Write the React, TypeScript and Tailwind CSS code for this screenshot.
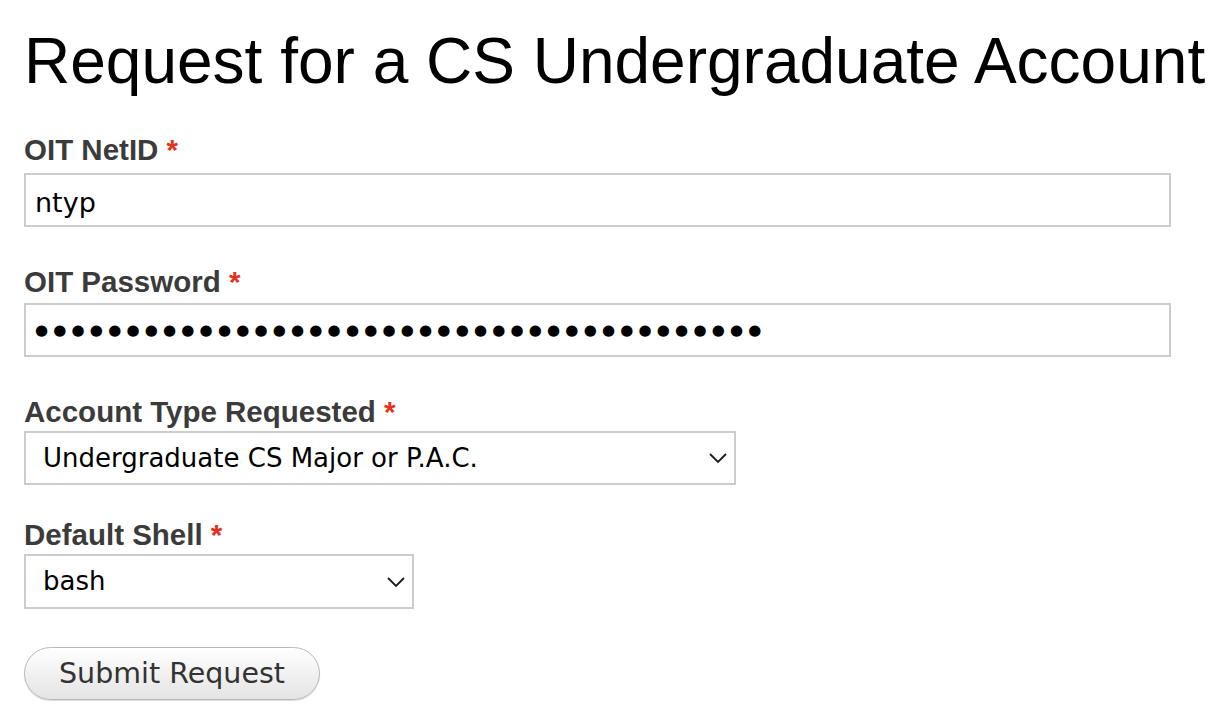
import React, { useState } from 'react';

const labelCls =
  "block font-['Liberation_Sans',Arial,sans-serif] text-[29.5px] font-bold leading-[32px] text-[#3b3b3b]";
const fieldFont = "font-['DejaVu_Sans','Noto_Sans',sans-serif] text-[26px] text-black";

function Required() {
  return <span className="text-[#e3311d]"> *</span>;
}

function Chevron() {
  return (
    <svg
      className="pointer-events-none absolute top-1/2 right-[9px] -translate-y-1/2"
      width="18"
      height="11"
      viewBox="0 0 18 11"
      fill="none"
    >
      <path d="M1 1.5 9 9.5 17 1.5" stroke="#1a1a1a" strokeWidth="1.8" />
    </svg>
  );
}

export default function App() {
  const [netId, setNetId] = useState('ntyp');
  const [password, setPassword] = useState('●'.repeat(40));
  const [accountType, setAccountType] = useState('ugrad');
  const [shell, setShell] = useState('bash');

  return (
    <div className="min-h-screen bg-white px-6">
      <h1 className="pt-[29px] font-['Liberation_Sans',Arial,sans-serif] text-[64px] leading-[64px] font-normal text-black">
        Request for a CS Undergraduate Account
      </h1>

      <form className="flex flex-col" onSubmit={(e) => e.preventDefault()}>
        {/* netid */}
        <label className={`${labelCls} mt-[41px]`}>
          OIT NetID
          <Required />
        </label>
        <input
          value={netId}
          onChange={(e) => setNetId(e.target.value)}
          className="mt-[7px] h-[54px] w-[1147px] border-2 border-[#cccccc] px-[9px] pt-[5px] font-['DejaVu_Sans','Noto_Sans',sans-serif] text-[27px] text-black outline-none"
        />

        {/* password */}
        <label className={`${labelCls} mt-[39px]`}>
          OIT Password
          <Required />
        </label>
        <input
          type="text"
          value={password}
          onChange={(e) => setPassword(e.target.value)}
          className="mt-[5px] h-[54px] w-[1147px] border-2 border-[#cccccc] px-[9px] font-['DejaVu_Sans',sans-serif] text-[15px] tracking-[5.2px] text-black outline-none"
        />

        {/* account type */}
        <label className={`${labelCls} mt-[39px]`}>
          Account Type Requested
          <Required />
        </label>
        <div className="relative mt-[3px] w-[712px]">
          <select
            value={accountType}
            onChange={(e) => setAccountType(e.target.value)}
            className={`${fieldFont} h-[54px] w-full appearance-none border-2 border-[#cccccc] bg-white pr-10 pl-[17px] outline-none`}
          >
            <option value="ugrad">Undergraduate CS Major or P.A.C.</option>
            <option value="other">Other</option>
          </select>
          <Chevron />
        </div>

        {/* shell */}
        <label className={`${labelCls} mt-[34px]`}>
          Default Shell
          <Required />
        </label>
        <div className="relative mt-[3px] w-[390px]">
          <select
            value={shell}
            onChange={(e) => setShell(e.target.value)}
            className={`${fieldFont} h-[55px] w-full appearance-none border-2 border-[#cccccc] bg-white pr-10 pl-[17px] outline-none`}
          >
            <option value="bash">bash</option>
            <option value="zsh">zsh</option>
            <option value="tcsh">tcsh</option>
          </select>
          <Chevron />
        </div>

        <div className="mt-[38px]">
          <button
            type="submit"
            className="h-[53px] w-[296px] rounded-full border border-[#b8b8b8] bg-gradient-to-b from-white to-[#e4e4e4] pt-[2px] font-['DejaVu_Sans',sans-serif] text-[28.5px] text-[#333333] shadow-[0_1px_1px_rgba(0,0,0,0.15)]"
          >
            Submit Request
          </button>
        </div>
      </form>
    </div>
  );
}
